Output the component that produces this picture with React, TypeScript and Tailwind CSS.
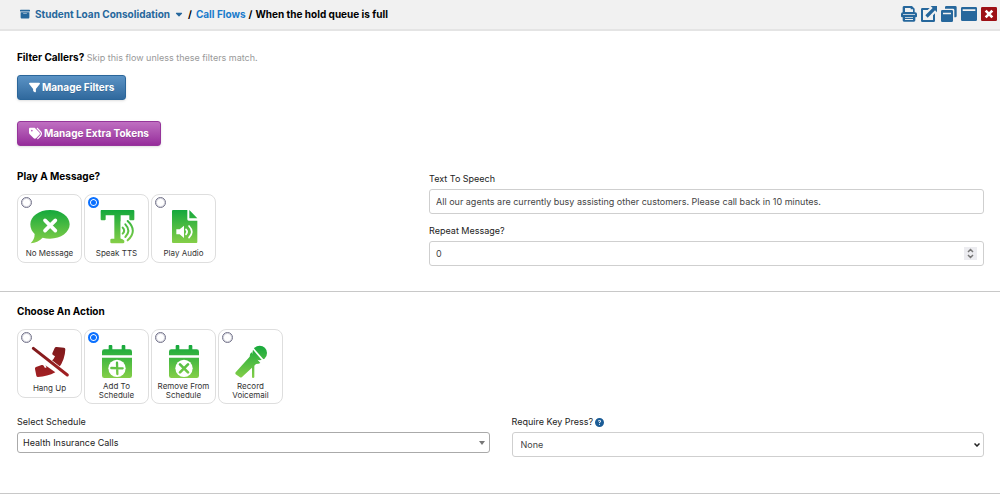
import { useState, type ReactNode } from 'react';
import { FaBoxArchive, FaCaretDown, FaCircleQuestion, FaFilter, FaTags } from 'react-icons/fa6';
import { clsx } from 'clsx';

interface Option {
  id: string;
  label: string;
  icon: ReactNode;
}

const GREEN = 'url(#green)';

function Art({ children }: { children: ReactNode }) {
  return (
    <svg viewBox="0 0 120 108" className="mx-auto h-9 w-10 shrink-0" aria-hidden="true">
      <defs>
        <linearGradient id="green" gradientUnits="userSpaceOnUse" x1="0" y1="6" x2="0" y2="106">
          <stop offset="0" stopColor="#14a83c" />
          <stop offset="1" stopColor="#86cf48" />
        </linearGradient>
        <linearGradient id="red" gradientUnits="userSpaceOnUse" x1="0" y1="10" x2="0" y2="100">
          <stop offset="0" stopColor="#7d1a1c" />
          <stop offset="1" stopColor="#a32023" />
        </linearGradient>
      </defs>
      {children}
    </svg>
  );
}

function Calendar({ children }: { children: ReactNode }) {
  return (
    <Art>
      <path
        fill={GREEN}
        d="M22 19h13V9q0-3 3-3h5q3 0 3 3v10h28V9q0-3 3-3h5q3 0 3 3v10h13q7 0 7 7v11H15V26q0-7 7-7zM15 44h90v54q0 7-7 7H22q-7 0-7-7z"
      />
      <circle cx="60" cy="76" r="26" fill="#fff" />
      {children}
    </Art>
  );
}

const messageOptions: Option[] = [
  {
    id: 'none',
    label: 'No Message',
    icon: (
      <Art>
        <path
          fill={GREEN}
          d="M60 6c33 0 59 19 59 43S93 92 60 92q-12 0-22-3-15 15-36 17 12-12 12-28Q1 66 1 49C1 25 27 6 60 6z"
        />
        <path stroke="#fff" strokeWidth="11" strokeLinecap="round" d="M45 37l31 31M76 37L45 68" />
      </Art>
    ),
  },
  {
    id: 'tts',
    label: 'Speak TTS',
    icon: (
      <Art>
        <path
          fill={GREEN}
          d="M13 6h96q3 0 3 3v25q0 3-3 3h-9q-3 0-3-3V22H71v70h7q4 0 4 3v8q0 3-4 3H44q-4 0-4-3v-8q0-3 4-3h8V22H26v12q0 3-3 3h-9q-3 0-3-3V9q0-3 2-3z"
        />
        <path fill="#fff" d="M71 40h20q24 12 24 28T96 98H83l-12-8z" />
        <g fill="none" stroke={GREEN} strokeWidth="6" strokeLinecap="round">
          <path d="M77 59q9 9 0 18M85 49q18 19 0 38M92 39q31 29 0 58" />
        </g>
      </Art>
    ),
  },
  {
    id: 'audio',
    label: 'Play Audio',
    icon: (
      <Art>
        <path fill={GREEN} d="M27 6h43v28q0 4 4 4h26v64q0 3-3 3H27q-3 0-3-3V9q0-3 3-3zM76 6l24 25H76z" />
        <path fill="#fff" d="M37 64h10l13-11v37L47 79H37z" />
        <g fill="none" stroke="#fff" strokeWidth="5" strokeLinecap="round">
          <path d="M66 64q7 7 0 15M75 54q17 18 0 35" />
        </g>
      </Art>
    ),
  },
];

const actionOptions: Option[] = [
  {
    id: 'hangup',
    label: 'Hang Up',
    icon: (
      <Art>
        <path
          fill="url(#red)"
          d="M80 12l22 2q4 0 4 5-1 32-20 56L64 55q8-7 11-15l-6-4q-3-2-2-5l7-16q2-4 6-3zM46 67l30 21Q52 101 24 102q-4 0-5-4l-4-20q-1-4 3-6l17-6q4-1 6 2l4 7 5-2z"
        />
        <path stroke="#fff" strokeWidth="13" d="M10 16l102 80" />
        <path stroke="url(#red)" strokeWidth="9" strokeLinecap="round" d="M10 16l102 80" />
      </Art>
    ),
  },
  {
    id: 'add',
    label: 'Add To Schedule',
    icon: (
      <Calendar>
        <path stroke={GREEN} strokeWidth="7" strokeLinecap="round" d="M43 75l34 1M60 59l1 34" />
      </Calendar>
    ),
  },
  {
    id: 'remove',
    label: 'Remove From Schedule',
    icon: (
      <Calendar>
        <path stroke={GREEN} strokeWidth="8" strokeLinecap="round" d="M48 64l24 24M72 64L48 88" />
      </Calendar>
    ),
  },
  {
    id: 'voicemail',
    label: 'Record Voicemail',
    icon: (
      <Art>
        <circle cx="86" cy="30" r="22" fill={GREEN} />
        <path stroke="#fff" strokeWidth="5" d="M62 12l38 44" />
        <path
          fill={GREEN}
          d="M61 28l27 32q-5 3-13 3L70 68v34q0 3-4 3-3 0-3-3V74L33 102q-3 3-6 1L14 94q-2-3 0-6l42-47q0-8 5-13z"
        />
      </Art>
    ),
  },
];

interface CardsProps {
  name: string;
  legend: string;
  options: Option[];
  value: string;
  onChange: (id: string) => void;
}

function OptionCards({ name, legend, options, value, onChange }: CardsProps) {
  return (
    <fieldset>
      <legend className="text-[10px] leading-4 font-bold text-black">{legend}</legend>
      <div className="mt-2.5 flex items-start gap-0.5">
        {options.map((opt) => (
          <label
            key={opt.id}
            className="flex w-[65px] flex-col rounded-lg border border-[#dedede] bg-white p-0.5"
          >
            <input
              type="radio"
              name={name}
              checked={value === opt.id}
              onChange={() => onChange(opt.id)}
              className="ml-px size-[11px] appearance-none rounded-full border border-[#73738a] bg-white shadow-[inset_0_0_0_1px_#d5d5dd] checked:border-2 checked:border-[#0a70ff] checked:bg-[#0a70ff] checked:shadow-[inset_0_0_0_1px_#fff]"
            />
            {opt.icon}
            <span className="mt-0.5 flex min-h-3.5 items-center justify-center py-px text-center text-[8px] leading-[9px] text-[#333]">
              {opt.label}
            </span>
          </label>
        ))}
      </div>
    </fieldset>
  );
}

function HeaderIcon({ label, danger, children }: { label: string; danger?: boolean; children: ReactNode }) {
  return (
    <button type="button" aria-label={label} className={clsx(danger ? 'text-[#9d1015]' : 'text-[#26679c]')}>
      <svg viewBox="0 0 48 48" fill="currentColor" className="size-4" aria-hidden="true">
        {children}
      </svg>
    </button>
  );
}

const fieldLabel = 'block text-[9px] leading-4 text-[#222]';

export default function App() {
  const [message, setMessage] = useState('tts');
  const [action, setAction] = useState('add');
  const [speech, setSpeech] = useState(
    'All our agents are currently busy assisting other customers. Please call back in 10 minutes.'
  );
  const [repeat, setRepeat] = useState('0');

  return (
    <div className="bg-white font-[Inter,sans-serif] text-[#222]">
      <header className="flex min-h-[31px] items-center justify-between border-b-2 border-[#e4e4e4] bg-[#f1f1f1] pr-[3px] pb-px pl-5">
        <nav className="flex items-center text-[10px] leading-4 font-bold text-black" aria-label="Breadcrumb">
          <button type="button" className="flex items-center text-[#26679c]">
            <FaBoxArchive className="mr-[5px] size-[10px]" />
            Student Loan Consolidation
            <FaCaretDown className="ml-1 size-[10px]" />
          </button>
          <span className="mx-1">/</span>
          <a href="#call-flows" className="text-[#1a7bcb]">
            Call Flows
          </a>
          <span className="mx-[3px]">/</span>
          <span>When the hold queue is full</span>
        </nav>
        <div className="flex items-center gap-1">
          <HeaderIcon label="Print">
            <path
              fillRule="evenodd"
              d="M10 0h23l8 8v11h2q5 0 5 5v7q0 3-3 3h-2v9q0 4-4 4H9q-4 0-4-4v-9H3q-3 0-3-3v-7q0-5 5-5V4q0-4 5-4zm2 6v12h24v-8h-7V6zM6 25v2h36v-2zM12 33v2h24v-2zM12 39v3h24v-3z"
            />
          </HeaderIcon>
          <HeaderIcon label="Open in new window">
            <path d="M4 6h22l-6 6H6v30h30V28l6-6v22q0 4-4 4H4q-4 0-4-4V10q0-4 4-4z" />
            <path d="M29 0h19v19l-6-6-22 22-7-7L35 6z" />
          </HeaderIcon>
          <HeaderIcon label="Restore window">
            <path d="M16 0h27q4 0 4 4v26q0 4-4 4h-3V12q0-4-4-4H12V4q0-4 4-4z" />
            <path fillRule="evenodd" d="M4 12h28q4 0 4 4v28q0 4-4 4H4q-4 0-4-4V16q0-4 4-4zm2 8v5h24v-5z" />
          </HeaderIcon>
          <HeaderIcon label="Maximize window">
            <path fillRule="evenodd" d="M4 3h40q4 0 4 4v34q0 4-4 4H4q-4 0-4-4V7q0-4 4-4zm1 7v5h38v-5z" />
          </HeaderIcon>
          <HeaderIcon label="Close" danger>
            <path d="M4 3h40q4 0 4 4v34q0 4-4 4H4q-4 0-4-4V7q0-4 4-4z" />
            <path stroke="#fff" strokeWidth="8" d="M14 14l20 20M34 14L14 34" />
          </HeaderIcon>
        </div>
      </header>

      <main>
        <section className="border-b border-[#c8c8c8] pt-[18px] pr-[5px] pb-[25px] pl-1.5">
          <div className="px-[11px]">
            <p className="text-[9px] leading-4 text-[#999]">
              <strong className="text-[10px] font-bold text-black">Filter Callers?</strong> Skip this flow unless
              these filters match.
            </p>
            <button
              type="button"
              className="mt-[9px] flex h-[25px] items-center gap-0.5 rounded-[3px] border border-[#2b669a] bg-linear-to-b from-[#5b93c5] to-[#30699d] px-[11px] text-[10px] font-bold text-white shadow-sm text-shadow-2xs"
            >
              <FaFilter className="size-[11px]" />
              Manage Filters
            </button>
            <button
              type="button"
              className="mt-[21px] flex h-[25px] items-center gap-0.5 rounded-[3px] border border-[#95359a] bg-linear-to-b from-[#bf6fc1] to-[#962b9b] px-[11px] text-[10px] font-bold text-white shadow-sm text-shadow-2xs"
            >
              <FaTags className="size-[13px]" />
              Manage Extra Tokens
            </button>
          </div>
          <div className="mt-[22px] flex">
            <div className="w-5/12 px-[11px]">
              <OptionCards
                name="message"
                legend="Play A Message?"
                options={messageOptions}
                value={message}
                onChange={setMessage}
              />
            </div>
            <div className="w-7/12 px-[11px] pt-[3px]">
              <label htmlFor="speech" className={fieldLabel}>
                Text To Speech
              </label>
              <input
                id="speech"
                value={speech}
                onChange={(e) => setSpeech(e.target.value)}
                className="mt-0.5 h-[25px] w-full rounded-[3px] border border-[#cfcfcf] px-1.5 text-[9px] text-[#444] outline-none"
              />
              <label htmlFor="repeat" className={clsx(fieldLabel, 'mt-[9px]')}>
                Repeat Message?
              </label>
              <div className="mt-0.5 flex h-[25px] items-center rounded-[3px] border border-[#cfcfcf] px-1.5">
                <input
                  id="repeat"
                  type="number"
                  value={repeat}
                  onChange={(e) => setRepeat(e.target.value)}
                  className="min-w-0 flex-1 appearance-none text-[9px] text-[#444] outline-none [&::-webkit-inner-spin-button]:appearance-none"
                />
                <svg viewBox="0 0 26 26" className="size-[13px] bg-[#ececf0]" aria-hidden="true">
                  <path d="M8 10l5-5 5 5M8 16l5 5 5-5" fill="none" stroke="#777" strokeWidth="3" />
                </svg>
              </div>
            </div>
          </div>
        </section>

        <section className="border-b border-[#c8c8c8] pt-[11px] pr-[5px] pb-9 pl-1.5">
          <div className="px-[11px]">
            <OptionCards
              name="action"
              legend="Choose An Action"
              options={actionOptions}
              value={action}
              onChange={setAction}
            />
          </div>
          <div className="mt-2.5 flex">
            <div className="w-1/2 px-[11px]">
              <label htmlFor="schedule" className={fieldLabel}>
                Select Schedule
              </label>
              <div className="mt-0.5 grid items-center">
                <select
                  id="schedule"
                  className="col-start-1 row-start-1 h-[21px] w-full appearance-none rounded-[3px] border border-[#aaa] bg-white px-[5px] text-[9px] text-[#222]"
                >
                  <option>Health Insurance Calls</option>
                </select>
                <svg
                  viewBox="0 0 6 4"
                  className="pointer-events-none col-start-1 row-start-1 mr-[5px] h-1 w-1.5 justify-self-end"
                  aria-hidden="true"
                >
                  <path d="M0 0h6L3 4z" fill="#777" />
                </svg>
              </div>
            </div>
            <div className="w-1/2 px-[11px]">
              <div className="flex items-center gap-0.5">
                <label htmlFor="keypress" className={fieldLabel}>
                  Require Key Press?
                </label>
                <FaCircleQuestion className="size-[9px] text-[#1b5c96]" />
              </div>
              <div className="mt-0.5 grid items-center">
                <select
                  id="keypress"
                  className="col-start-1 row-start-1 h-[25px] w-full appearance-none rounded-[3px] border border-[#cfcfcf] bg-white px-2 text-[9px] text-[#444]"
                >
                  <option>None</option>
                </select>
                <svg
                  viewBox="0 0 12 8"
                  className="pointer-events-none col-start-1 row-start-1 mr-1 h-1 w-1.5 justify-self-end"
                  aria-hidden="true"
                >
                  <path d="M1 1l5 5 5-5" fill="none" stroke="#222" strokeWidth="3" />
                </svg>
              </div>
            </div>
          </div>
        </section>
      </main>
    </div>
  );
}
